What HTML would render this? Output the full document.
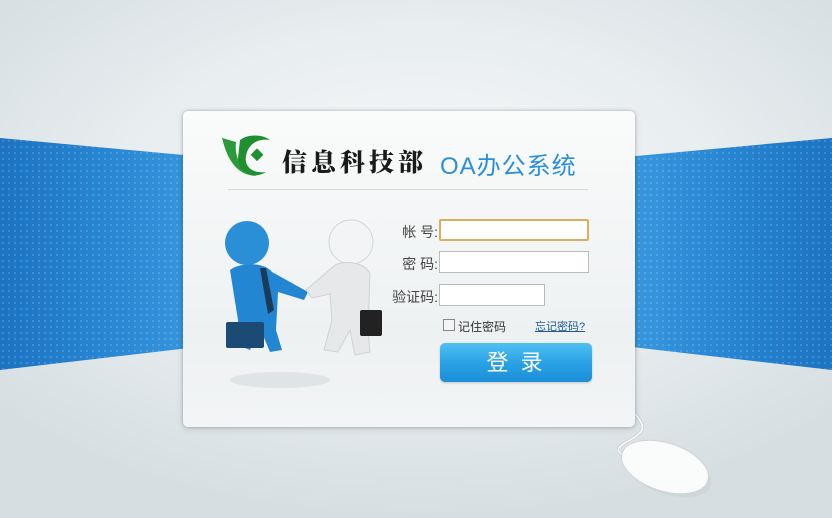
<!DOCTYPE html>
<html><head><meta charset="utf-8"><style>
*{margin:0;padding:0;box-sizing:border-box}
body{width:832px;height:518px;overflow:hidden;position:relative;font-family:"Liberation Sans","Noto Sans CJK SC",sans-serif;
background:radial-gradient(ellipse 560px 320px at 420px 200px,#f8f9fa 0%,#e8edef 55%,#d5dee1 100%);}
.bl{position:absolute;left:0;top:138px;width:200px;height:232px;background:linear-gradient(90deg,#1b73c2,#2a88d4 60%,#3898de);clip-path:polygon(0 0,100% 8%,100% 90%,0 100%)}
.br{position:absolute;left:630px;top:138px;width:202px;height:232px;background:linear-gradient(90deg,#3898de,#2a88d4 40%,#1b73c2);clip-path:polygon(0 8%,100% 0,100% 100%,0 90%)}
.dots{background-image:radial-gradient(rgba(255,255,255,.16) 1px,transparent 1.3px);background-size:6px 6px}
.card{position:absolute;left:183px;top:111px;width:452px;height:316px;border-radius:5px;background:linear-gradient(180deg,#fafbfb,#eef1f2 70%,#f2f4f5);box-shadow:0 0 3px rgba(0,0,0,.25),0 2px 8px rgba(0,0,0,.12)}
.line{position:absolute;left:228px;top:189px;width:360px;height:1px;background:#d4d8da}
.t1{position:absolute;left:282px;top:143px;font-size:25px;font-weight:900;color:#1a1a1a;letter-spacing:4px;font-family:"Noto Serif CJK SC",serif}
.t2{position:absolute;left:440px;top:146px;font-size:24px;color:#2a8fd6;letter-spacing:1px}
.lab{position:absolute;font-size:14px;color:#444;text-align:right;width:60px}
.in{position:absolute;left:439px;width:150px;height:22px;background:#fff;border:1px solid #b9bcbe}
.btn{position:absolute;left:440px;top:343px;width:152px;height:39px;border-radius:5px;background:linear-gradient(180deg,#4fc1f2,#2aa2e5 50%,#1b8fd8);color:#fff;font-size:22px;text-align:center;line-height:39px;letter-spacing:3px;box-shadow:0 1px 2px rgba(0,0,0,.2)}
</style></head><body>
<div class="bl"></div><div class="bl dots"></div>
<div class="br"></div><div class="br dots"></div>
<svg style="position:absolute;left:600px;top:400px" width="130" height="110">
<path d="M30 8 C45 25 48 30 30 40 C15 48 14 52 30 58" stroke="#c8cdd0" stroke-width="3" fill="none"/>
<path d="M30 8 C45 25 48 30 30 40 C15 48 14 52 30 58" stroke="#fff" stroke-width="1.5" fill="none"/>
<ellipse cx="68" cy="72" rx="45" ry="22" transform="rotate(18 68 72)" fill="#c8d0d3" opacity=".6"/>
<ellipse cx="65" cy="67" rx="45" ry="24" transform="rotate(18 65 67)" fill="#fafbfb" stroke="#cfd5d6"/>
</svg>
<div class="card"></div>
<svg style="position:absolute;left:218px;top:132px" width="60" height="50">
<path d="M4 6 C10 30 20 44 40 44 C25 40 16 28 18 10 Z" fill="#2a9a3a"/>
<path d="M22 8 C30 2 44 2 52 8 C40 6 30 12 28 24 C26 34 34 42 48 40 C36 48 20 40 20 26 Z" fill="#1f8f30"/>
<rect x="35" y="18" width="9" height="9" transform="rotate(45 39 22)" fill="#1f8f30"/>
</svg>
<div class="t1">信息科技部</div>
<div class="t2">OA办公系统</div>
<div class="line"></div>
<svg style="position:absolute;left:220px;top:210px" width="170" height="190">
<ellipse cx="60" cy="170" rx="50" ry="8" fill="#dfe4e6"/>
<circle cx="27" cy="33" r="22" fill="#2a8fd6"/>
<path d="M10 60 C20 52 45 52 52 62 L88 82 L84 90 L58 82 L56 120 L62 140 L50 142 L40 118 L30 140 L20 136 L18 110 Z" fill="#2386d2"/>
<path d="M40 58 L46 58 L54 100 L48 104 Z" fill="#1a3a5a"/>
<rect x="6" y="112" width="38" height="26" rx="2" fill="#1b4a74"/>
<circle cx="131" cy="32" r="22" fill="#f3f4f5" stroke="#d2d6d8"/>
<path d="M115 55 C125 50 145 52 150 64 L148 120 L150 142 L135 145 L130 120 L118 142 L104 140 L112 110 L110 84 L92 88 L86 80 Z" fill="#e6e8e9" stroke="#cfd3d5"/>
<rect x="140" y="100" width="22" height="26" rx="2" fill="#222"/>
</svg>
<div class="lab" style="left:378px;top:222px">帐 号:</div>
<div class="lab" style="left:378px;top:254px">密 码:</div>
<div class="lab" style="left:378px;top:287px">验证码:</div>
<div class="in" style="top:219px;border-color:#dcae5e;border-width:2px;border-radius:2px"></div>
<div class="in" style="top:251px"></div>
<div class="in" style="top:284px;width:106px"></div>
<div style="position:absolute;left:443px;top:319px;width:12px;height:12px;border:1px solid #888;background:#f5f5f5"></div>
<div style="position:absolute;left:458px;top:318px;font-size:12px;color:#333">记住密码</div>
<div style="position:absolute;left:535px;top:318px;font-size:11px;color:#1a5a9a;text-decoration:underline">忘记密码?</div>
<div class="btn">登 录</div>
</body></html>
